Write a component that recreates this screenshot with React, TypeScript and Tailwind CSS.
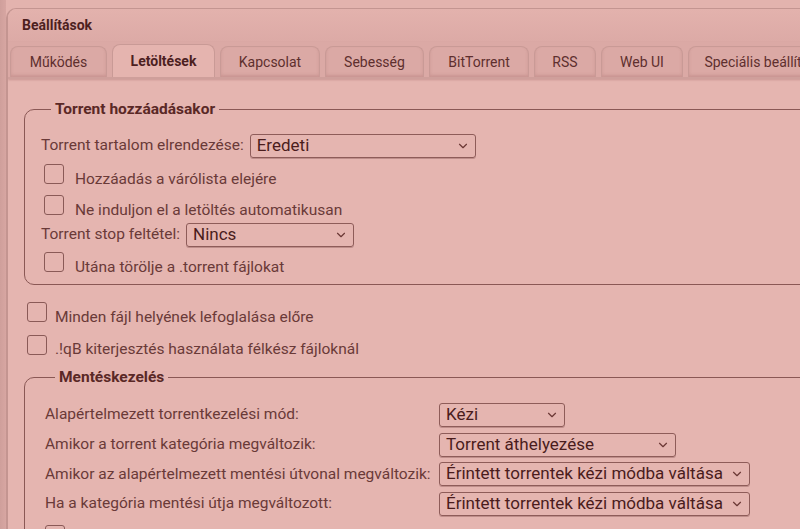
import { ChevronDown } from 'lucide-react';

const tabs = [
  { label: 'Működés', w: 'w-[97px]' },
  { label: 'Letöltések', w: 'w-[103px]', active: true },
  { label: 'Kapcsolat', w: 'w-[100px]' },
  { label: 'Sebesség', w: 'w-[99px]' },
  { label: 'BitTorrent', w: 'w-[100px]' },
  { label: 'RSS', w: 'w-[62px]' },
  { label: 'Web UI', w: 'w-[82px]' },
  { label: 'Speciális beállítások', w: 'w-[160px]' },
];

function Select({ value, w }: { value: string; w: string }) {
  return (
    <div
      className={`${w} h-[24px] flex items-center justify-between pl-[6px] pr-[5px] border border-[#8e5c59] rounded-[3px] text-[17px] text-[#4a1c1c] shadow-[0_1px_0_rgba(120,70,70,0.35)]`}
    >
      <span className="truncate">{value}</span>
      <ChevronDown className="w-[14px] h-[14px] shrink-0 text-[#6b3835]" strokeWidth={2} />
    </div>
  );
}

function Check() {
  return <div className="w-[20px] h-[20px] shrink-0 border border-[#8a5a57] rounded-[3px]" />;
}

export default function App() {
  return (
    <div
      className="w-[800px] h-[529px] overflow-hidden bg-[#dcaca7] flex"
      style={{ fontFamily: 'Roboto, "Liberation Sans", sans-serif' }}
    >
      <div className="w-[6px] shrink-0 bg-gradient-to-r from-[#cf9f9b] to-[#d7a6a2]" />
      <div className="flex-1 flex flex-col pt-[8px] bg-[#e3b3ae]">
        <div className="flex-1 flex flex-col border-l-2 border-t border-[#c49591] rounded-tl-[10px] bg-[#e5b5b0] overflow-hidden">
          {/* title bar */}
          <div className="h-[33px] shrink-0 flex items-center pl-[14px] bg-gradient-to-b from-[#e3b2ad] to-[#dcaaa6] text-[14px] font-bold text-[#4d1f1f]">
            Beállítások
          </div>
          {/* tab strip */}
          <div className="h-[37px] shrink-0 flex items-end gap-[5px] pl-[2px] bg-[#dba9a5] border-b-2 border-[#cf9f9b] shadow-[0_1px_2px_rgba(120,60,60,0.25)]">
            {tabs.map((t) => (
              <div
                key={t.label}
                className={`${t.w} shrink-0 h-[31px] flex items-center justify-center whitespace-nowrap rounded-t-[8px] border border-b-0 border-[#c99a96] text-[14px] ${
                  t.active
                    ? 'bg-[#e5b4af] font-bold text-[#4d1f1f] h-[33px]'
                    : 'bg-[#dba9a5] text-[#5e2f2e] shadow-[inset_0_-2px_3px_rgba(150,90,90,0.25)]'
                }`}
              >
                {t.label}
              </div>
            ))}
          </div>
          {/* content */}
          <div className="flex-1 w-[1000px] pl-[16px] pt-[21px] text-[15.5px] text-[#6a3a38]">
            <fieldset className="border border-[#8a5855] rounded-[10px] pl-[16px] pb-[7px]">
              <legend className="ml-[10px] px-[4px] text-[15.5px] leading-[18px] font-bold text-[#5a2826]">
                Torrent hozzáadásakor
              </legend>
              <div className="flex items-center h-[24px] mt-[16px] gap-[6px]">
                <span>Torrent tartalom elrendezése:</span>
                <Select value="Eredeti" w="w-[226px]" />
              </div>
              <div className="flex items-start h-[31px] mt-[6px] pl-[3px] gap-[11px]">
                <Check />
                <span className="mt-[5px] leading-[20px]">Hozzáadás a várólista elejére</span>
              </div>
              <div className="flex items-start h-[29px] pl-[3px] gap-[11px]">
                <Check />
                <span className="mt-[5px] leading-[20px]">Ne induljon el a letöltés automatikusan</span>
              </div>
              <div className="flex items-center h-[22px] gap-[6px]">
                <span>Torrent stop feltétel:</span>
                <Select value="Nincs" w="w-[168px]" />
              </div>
              <div className="flex items-start h-[25px] mt-[6px] pl-[3px] gap-[11px]">
                <Check />
                <span className="mt-[5px] leading-[20px]">Utána törölje a .torrent fájlokat</span>
              </div>
            </fieldset>

            <div className="flex items-start h-[33px] mt-[17px] pl-[3px] gap-[8px]">
              <Check />
              <span className="mt-[5px] leading-[20px]">Minden fájl helyének lefoglalása előre</span>
            </div>
            <div className="flex items-start h-[33px] pl-[3px] gap-[8px]">
              <Check />
              <span className="mt-[4px] leading-[20px]">.!qB kiterjesztés használata félkész fájloknál</span>
            </div>

            <fieldset className="border border-[#8a5855] rounded-[10px] pl-[20px] mt-[0px]">
              <legend className="ml-[10px] px-[4px] text-[15.5px] leading-[18px] font-bold text-[#5a2826]">
                Mentéskezelés
              </legend>
              <div className="grid grid-cols-[394px_auto] auto-rows-[29.7px] items-center mt-[14px]">
                <span>Alapértelmezett torrentkezelési mód:</span>
                <Select value="Kézi" w="w-[126px]" />
                <span>Amikor a torrent kategória megváltozik:</span>
                <Select value="Torrent áthelyezése" w="w-[237px]" />
                <span>Amikor az alapértelmezett mentési útvonal megváltozik:</span>
                <Select value="Érintett torrentek kézi módba váltása" w="w-[311px]" />
                <span>Ha a kategória mentési útja megváltozott:</span>
                <Select value="Érintett torrentek kézi módba váltása" w="w-[311px]" />
              </div>
              <div className="flex items-start h-[30px] mt-[6px]">
                <Check />
              </div>
            </fieldset>
          </div>
        </div>
      </div>
    </div>
  );
}
